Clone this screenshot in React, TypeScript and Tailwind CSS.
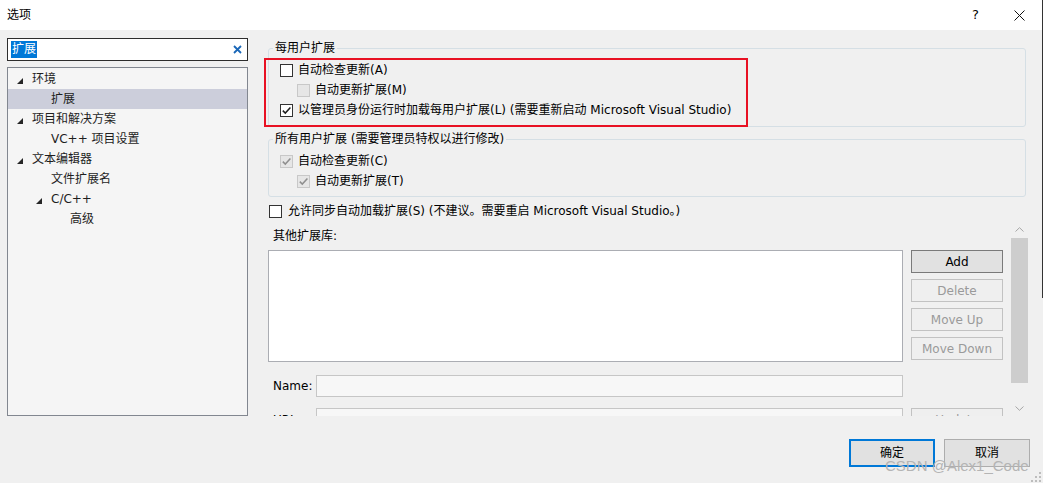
import React from "react";

function CheckBox({ checked = false, disabled = false }: { checked?: boolean; disabled?: boolean }) {
  const box = disabled ? "border-[#c8c8c8] bg-[#e6e6e6]" : "border-[#333333] bg-white";
  return (
    <span className={`flex h-[13px] w-[13px] shrink-0 items-center justify-center border ${box}`}>
      {checked && (
        <svg width="11" height="11" viewBox="0 0 11 11">
          <path
            d="M1.8 5.6 L4.3 8.1 L9.4 2.6"
            fill="none"
            stroke={disabled ? "#8f8f8f" : "#1f1f1f"}
            strokeWidth="1.5"
          />
        </svg>
      )}
    </span>
  );
}

function CheckRow({
  label,
  checked = false,
  disabled = false,
  indent = false,
}: {
  label: string;
  checked?: boolean;
  disabled?: boolean;
  indent?: boolean;
}) {
  return (
    <div className={`flex h-[20px] items-center gap-[5px] ${indent ? "pl-[17px]" : ""}`}>
      <CheckBox checked={checked} disabled={disabled} />
      <span className="whitespace-nowrap">{label}</span>
    </div>
  );
}

function Tri() {
  return (
    <svg width="6" height="6" viewBox="0 0 6 6" className="mt-[3px]">
      <polygon points="6,0 6,6 0,6" fill="#262626" />
    </svg>
  );
}

type TreeItem = { label: string; pad: string; tri?: boolean; selected?: boolean };

const tree: TreeItem[] = [
  { label: "环境", pad: "pl-[9px]", tri: true },
  { label: "扩展", pad: "pl-[43px]", selected: true },
  { label: "项目和解决方案", pad: "pl-[9px]", tri: true },
  { label: "VC++ 项目设置", pad: "pl-[43px]" },
  { label: "文本编辑器", pad: "pl-[9px]", tri: true },
  { label: "文件扩展名", pad: "pl-[43px]" },
  { label: "C/C++", pad: "pl-[28px]", tri: true },
  { label: "高级", pad: "pl-[62px]" },
];

function Chevron({ up }: { up?: boolean }) {
  return (
    <svg width="9" height="5" viewBox="0 0 9 5">
      <path
        d={up ? "M0.5 4.5 L4.5 0.7 L8.5 4.5" : "M0.5 0.5 L4.5 4.3 L8.5 0.5"}
        fill="none"
        stroke="#a6a6a6"
        strokeWidth="1"
      />
    </svg>
  );
}

function SideButton({ label, primary = false }: { label: string; primary?: boolean }) {
  return (
    <div
      className={`flex h-[23px] w-[92px] shrink-0 items-center justify-center border ${
        primary ? "border-[#7a7a7a] bg-[#e1e1e1] text-black" : "border-[#c2c2c2] bg-[#efefef] text-[#9a9a9a]"
      }`}
    >
      {label}
    </div>
  );
}

export default function App() {
  return (
    <div className="relative flex h-[483px] w-[1043px] flex-col overflow-hidden bg-[#f0f0f0] font-['DejaVu_Sans','Noto_Sans_CJK_SC',sans-serif] text-[12px] leading-[16px] text-black">
      {/* title bar */}
      <div className="flex h-[30px] shrink-0 items-center bg-white pl-[7px]">
        <span>选项</span>
        <span className="ml-auto w-[7px] text-[13px]">?</span>
        <svg width="11" height="11" viewBox="0 0 11 11" className="ml-[35px] mr-[18px]">
          <path d="M0.5 0.5 L10.5 10.5 M10.5 0.5 L0.5 10.5" stroke="#111" strokeWidth="1" />
        </svg>
      </div>

      {/* main */}
      <div className="flex h-[386px] shrink-0">
        {/* left column */}
        <div className="ml-[7px] flex w-[241px] shrink-0 flex-col">
          <div className="mt-[8px] flex h-[23px] items-center border border-[#2d2d2d] bg-white pl-[3px] pr-[5px]">
            <span className="bg-[#0078d7] px-[1px] leading-[17px] text-white">扩展</span>
            <svg width="9" height="9" viewBox="0 0 9 9" className="ml-auto">
              <path d="M1 1 L8 8 M8 1 L1 8" stroke="#1a67b8" strokeWidth="1.8" />
            </svg>
          </div>
          <div className="mt-[6px] h-[349px] border border-[#828790] bg-[#f5f5f5] pt-[1px]">
            {tree.map((t) => (
              <div
                key={t.label}
                className={`flex h-[20px] items-center ${t.pad} ${t.selected ? "bg-[#cccedb]" : ""} text-[#1e1e1e]`}
              >
                {t.tri && (
                  <span className="flex w-[15px] shrink-0">
                    <Tri />
                  </span>
                )}
                <span className="whitespace-nowrap">{t.label}</span>
              </div>
            ))}
          </div>
        </div>

        {/* right column */}
        <div className="ml-[12px] flex w-[770px] shrink-0 flex-col overflow-hidden">
          <fieldset className="ml-[8px] mr-[4px] mt-[10px] rounded-[3px] border border-[#d5dfe5] pb-[6px] pl-[4px]">
            <legend className="px-[2px] leading-[16px]">每用户扩展</legend>
            <div className="ml-[7px] pt-[4px]">
              <CheckRow label="自动检查更新(A)" />
              <CheckRow label="自动更新扩展(M)" disabled indent />
              <CheckRow label="以管理员身份运行时加载每用户扩展(L) (需要重新启动 Microsoft Visual Studio)" checked />
            </div>
          </fieldset>

          <fieldset className="ml-[8px] mr-[4px] mt-[4px] rounded-[3px] border border-[#d5dfe5] pb-[5px] pl-[4px]">
            <legend className="px-[2px] leading-[16px]">所有用户扩展 (需要管理员特权以进行修改)</legend>
            <div className="ml-[7px] pt-[4px]">
              <CheckRow label="自动检查更新(C)" checked disabled />
              <CheckRow label="自动更新扩展(T)" checked disabled indent />
            </div>
          </fieldset>

          <div className="ml-[9px] mt-[4px] flex h-[20px] items-center gap-[6px]">
            <CheckBox />
            <span className="whitespace-nowrap">允许同步自动加载扩展(S) (不建议。需要重启 Microsoft Visual Studio。)</span>
          </div>

          {/* lower scroll region */}
          <div className="flex h-[195px] shrink-0 overflow-hidden">
            <div className="ml-[8px] flex w-[735px] shrink-0 flex-col">
              <div className="mt-[7px] pl-[5px]">其他扩展库:</div>
              <div className="mt-[6px] flex">
                <div className="h-[112px] w-[635px] shrink-0 border border-[#abadb3] bg-white" />
                <div className="ml-[8px] flex flex-col gap-[6px]">
                  <SideButton label="Add" primary />
                  <SideButton label="Delete" />
                  <SideButton label="Move Up" />
                  <SideButton label="Move Down" />
                </div>
              </div>
              <div className="mt-[13px] flex items-center">
                <span className="w-[48px] shrink-0 pl-[5px]">Name:</span>
                <div className="h-[22px] w-[587px] shrink-0 border border-[#c6c6c6] bg-[#f7f7f7]" />
              </div>
              <div className="mt-[11px] flex items-start">
                <span className="mt-[4px] w-[48px] shrink-0 pl-[5px]">URL:</span>
                <div className="h-[22px] w-[587px] shrink-0 border border-[#c6c6c6] bg-[#f7f7f7]" />
                <div className="ml-[8px]">
                  <SideButton label="Update" />
                </div>
              </div>
            </div>

            {/* scrollbar */}
            <div className="ml-[8px] flex w-[17px] shrink-0 flex-col">
              <div className="flex h-[17px] items-center justify-center">
                <Chevron up />
              </div>
              <div className="h-[145px] bg-[#cdcdcd]" />
              <div className="flex-1" />
              <div className="flex h-[16px] items-center justify-center">
                <Chevron />
              </div>
            </div>
          </div>
        </div>
      </div>

      {/* bottom buttons */}
      <div className="flex flex-1 items-start justify-end gap-[9px] pr-[13px] pt-[23px]">
        <div className="flex h-[28px] w-[86px] items-center justify-center border-2 border-[#0078d7] bg-[#e1e1e1]">
          确定
        </div>
        <div className="flex h-[28px] w-[86px] items-center justify-center border border-[#adadad] bg-[#e1e1e1]">
          取消
        </div>
      </div>

      {/* annotation overlay */}
      <div className="pointer-events-none absolute left-[264px] top-[58px] h-[69px] w-[484px] border-2 border-[#e81123]" />

      {/* watermark */}
      <div className="pointer-events-none absolute left-[885px] top-[457px] font-['Liberation_Sans',sans-serif] text-[15px] leading-[18px] text-[#b4b4b4]">
        CSDN @Alex1_Code
      </div>

      {/* window edge */}
      <div className="absolute right-0 top-0 h-[298px] w-[1px] bg-[#333333]" />

      {/* resize grip */}
      <svg width="10" height="10" viewBox="0 0 10 10" className="absolute bottom-[1px] right-[2px]">
        <rect x="8" y="0" width="2" height="2" fill="#bdbdbd" />
        <rect x="4" y="4" width="2" height="2" fill="#bdbdbd" />
        <rect x="8" y="4" width="2" height="2" fill="#bdbdbd" />
        <rect x="0" y="8" width="2" height="2" fill="#bdbdbd" />
        <rect x="4" y="8" width="2" height="2" fill="#bdbdbd" />
        <rect x="8" y="8" width="2" height="2" fill="#bdbdbd" />
      </svg>
    </div>
  );
}
